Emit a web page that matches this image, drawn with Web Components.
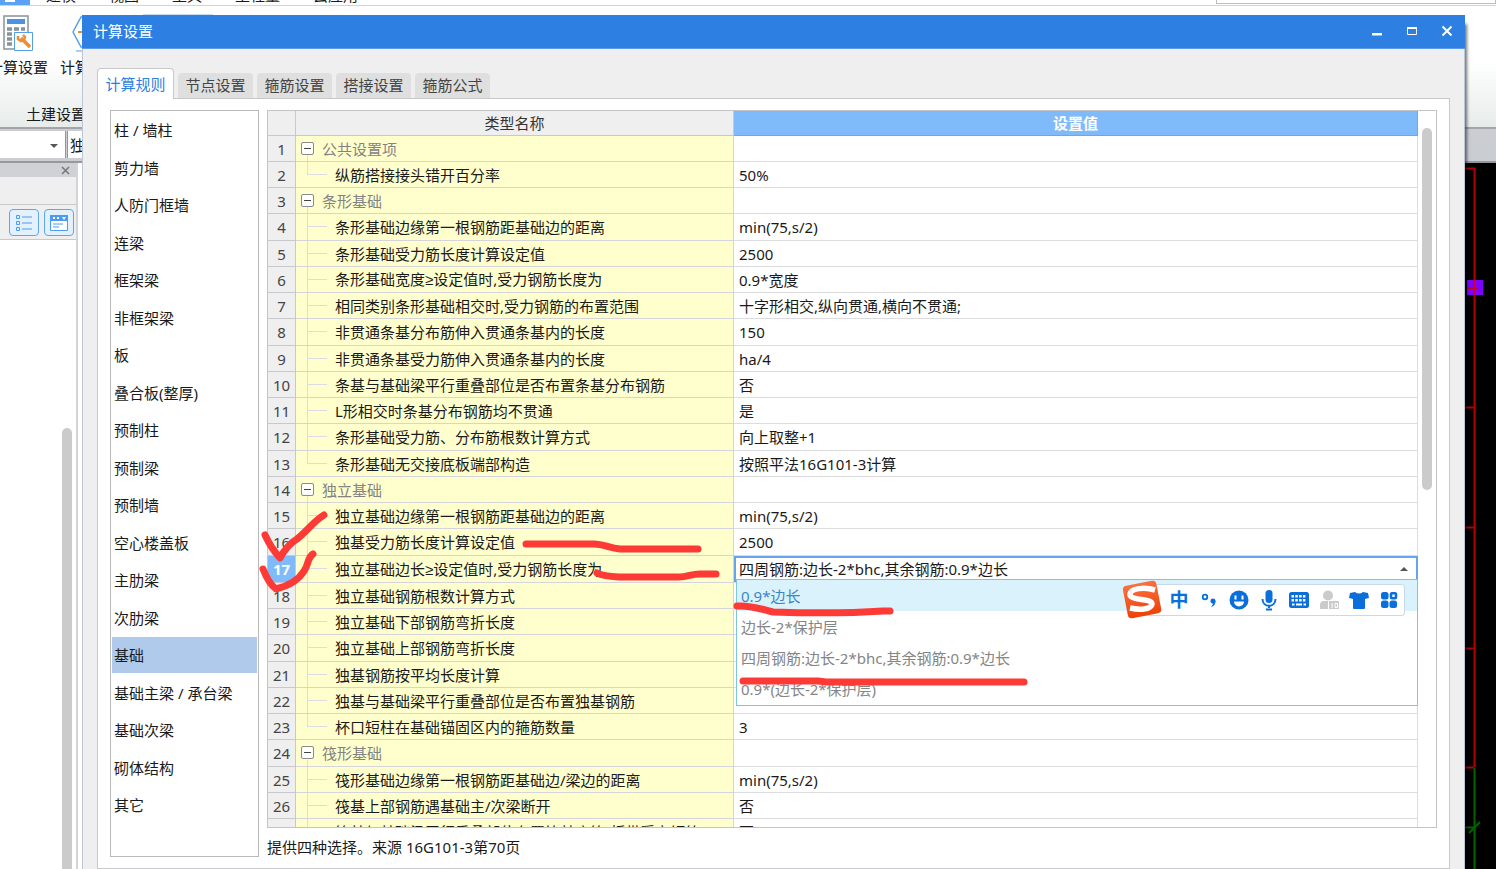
<!DOCTYPE html>
<html lang="zh-CN">
<head>
<meta charset="utf-8">
<title>计算设置</title>
<style>
html,body{margin:0;height:100%;overflow:hidden}
body{position:relative;display:flex;flex-direction:column;background:#fff;color:#1a1a1a;font:15px/20px "Noto Sans","Open Sans","Noto Sans CJK SC",sans-serif}
app-workspace{flex:1}
settings-dialog{position:absolute;left:82px;right:31px;top:15px;bottom:0;z-index:1}
ime-bar{position:absolute;right:91px;top:584px;z-index:2}
ink-marks{position:absolute;left:0;top:0;z-index:3}
</style>
</head>
<body>
<app-ribbon></app-ribbon>
<filter-bar></filter-bar>
<app-workspace><side-dock></side-dock><cad-canvas></cad-canvas></app-workspace>
<settings-dialog heading="计算设置">
  <tab-strip slot="tabs"></tab-strip>
  <category-list slot="nav"></category-list>
  <rule-grid></rule-grid>
  <span slot="hint">提供四种选择。来源 16G101-3第70页</span>
</settings-dialog>
<ime-bar></ime-bar>
<ink-marks></ink-marks>

<script>
const BASE = `:host,*{box-sizing:border-box}button,select,input{font:inherit;color:inherit;margin:0;padding:0;border:0;background:none;border-radius:0;outline:0}button{cursor:default}`;
function define(name, css, html) {
  customElements.define(name, class extends HTMLElement {
    constructor() {
      super();
      const root = this.attachShadow({mode: 'open'});
      root.innerHTML = `<style>${BASE}${css}</style>${typeof html === 'function' ? html(this) : html}`;
    }
  });
}

define('app-ribbon', `
:host{display:block;flex:none}
.menu{display:flex;height:6px;overflow:hidden;border-bottom:1px solid #d4d4d6;align-items:flex-end}
.menu .file{width:30px;height:5px;background:#5aa2f5;display:flex;justify-content:flex-end;padding-right:15px}
.file i{width:10px;height:2px;background:#fff}
.menu nav{display:flex;gap:33px;margin-left:16px;height:2px;align-items:flex-end}
.menu nav button{line-height:20px;height:20px}
.menu input{margin-left:auto;width:280px;height:20px;border:1px solid #bdbdbd;margin-bottom:1px}
.tools{display:flex;height:123px;padding-top:8px;background:linear-gradient(#fff 45%,#e7eceb);border-bottom:2px solid #a5a5a7;align-items:flex-start}
.tool{width:72px;flex:none;text-align:center;white-space:nowrap}
.tool:first-child{margin-left:-18px}
.tool svg{display:block;margin:0 auto 5px}
.group{display:flex;flex-direction:column;width:135px;height:106px;border-right:1px solid #e4e4e6}
.row{display:flex}
.label{margin:27px 0 0 26px}
.on{width:70px;height:60px;margin-left:8px;background:#c8dcf3}
`, `
<div class="menu"><span class="file"><i></i></span><nav><button>建模</button><button>视图</button><button>工具</button><button>工程量</button><button>云应用</button></nav><input aria-label="搜索"></div>
<div class="tools"><div class="group"><div class="row">
<button class="tool"><svg width="36" height="38" viewBox="0 0 36 38"><g fill="none"><path fill="#fff" stroke="#87939b" stroke-width="1.5" d="M4 2h24v33H4z"/><path fill="#4d93e0" d="M7 5h18v5H7z"/><path stroke="#87939b" stroke-width="3.5" stroke-dasharray="5 2" d="M7 15h18M7 20h12M7 25h7M7 30h7"/><path fill="#fff" stroke="#579fe8" d="M14.500 18.500h18v18h-18z"/><path stroke="#ee8e32" stroke-width="3.500" d="m21 24 9 9"/><path stroke="#ee8e32" stroke-width="2.500" d="M18 22v3l3 2 3-1 1-3-2-2"/></g></svg>计算设置</button>
<button class="tool"><svg width="36" height="38" viewBox="0 0 36 38"><path fill="#fff" stroke="#579fe8" stroke-width="1.500" d="m1 18 8-15h18l8 15-8 15H9z"/><path stroke="#ee8e32" stroke-width="2" d="M6 18h24"/><path stroke="#579fe8" d="M4 37h28"/></svg>计算规则</button>
</div><span class="label">土建设置</span></div><button class="on" aria-label="当前工具"></button></div>`);

define('filter-bar', `
:host{display:flex;flex:none;height:34px;padding:2px 0 3px;background:#cacdd2;border-bottom:2px solid #98989c}
label{display:flex;position:relative;width:66px;border-right:1px solid #96969a;background:#fff}
label+label{width:140px;margin-left:1px;border-left:1px solid #96969a}
select{appearance:none;width:100%;padding-left:2px}
label svg{position:absolute;right:7px;top:13px}
`, `<label><select aria-label="楼层"><option></option></select><svg width="8" height="5"><path d="M0 0h8L4 4z" fill="#555"/></svg></label><label><select aria-label="构件类型"><option>独立基础</option></select></label>`);

customElements.define('app-workspace', class extends HTMLElement {
  constructor() {
    super();
    this.attachShadow({mode: 'open'}).innerHTML = `<style>:host{display:flex;min-height:0;background:#fff}</style><slot></slot>`;
  }
});

define('side-dock', `
:host{display:flex;flex-direction:column;width:78px;flex:none;border-right:2px solid #d2d4d8;background:#fff}
.head{height:14px;background:#d0d1d6;display:flex;justify-content:flex-end;align-items:center;padding-right:6px}
.head button{display:flex}
.blank{height:28px;background:#efefef;border-bottom:1px solid #c9c9cb}
.views{height:35px;background:#efefef;border-bottom:1px solid #c9c9cb;display:flex;gap:5px;padding:4px 0 0 9px}
.views button{width:30px;height:27px;border:1px solid #5aa7f5;border-radius:4px;background:#e3f0fd;display:grid;place-items:center;flex:none}
.list{flex:1;display:flex;justify-content:flex-end;padding:188px 4px 0 0}
.thumb{width:10px;background:#cbcbcb;border-radius:5px 5px 0 0}
`, `<div class="head"><button aria-label="关闭"><svg width="9" height="9"><path d="m1 1 7 7m0-7-7 7" stroke="#77777a" stroke-width="1.500"/></svg></button></div><div class="blank"></div>
<div class="views"><button aria-label="列表"><svg width="18" height="18" fill="none" stroke="#4b9cf1"><path d="M1.500 1.500h3v3h-3zm0 6h3v3h-3zm0 6h3v3h-3zM7 3h10M7 9h10M7 15h10"/></svg></button><button aria-label="详情"><svg width="20" height="18"><path fill="#fff" stroke="#4b9cf1" d="M1.500 1.500h17v15h-17z"/><path fill="#4b9cf1" d="M1 1h18v6H1z"/><path stroke="#fff" stroke-dasharray="2 2" stroke-width="2" d="M4 4h7"/><path fill="#fff" d="M13 3h4l-2 3z"/><path stroke="#4b9cf1" d="M4 10h10M4 13h6"/></svg></button></div>
<div class="list"><div class="thumb"></div></div>`);

define('cad-canvas', `
:host{display:flex;flex:1;justify-content:flex-end;margin-left:6px;background:linear-gradient(90deg,#fff 50%,#000 50%)}
svg{display:block;flex:none}
`, `<svg width="60" height="706" fill="none"><g transform="translate(0 -163)"><path stroke="#b40000" stroke-width="2" d="M0 168.500h38.500V767M0 407.500h38M0 527.500h38M0 648.500h38M0 767.500h38"/><path stroke="#006400" stroke-width="2" d="M38.500 768v101M0 827.500h38"/><path stroke="#006400" stroke-width="2" d="m33 833 11-11"/><path fill="#8000ff" d="M31 280h16v15H31z"/><path stroke="#c00030" stroke-width="2" d="M31 288h10m-3-8v15"/></g></svg>`);

define('settings-dialog', `
:host{display:flex;flex-direction:column;border:1px solid #bcc6da;border-width:0 1px;background:#efefef;box-shadow:4px 7px 3px -2px rgba(0,0,0,.55)}
header{display:flex;align-items:center;height:34px;flex:none;margin:0 -1px;padding:0 12px 2px 11px;background:#2d7fe2;border-bottom:1px solid #5b9aea;color:#fff}
h1{flex:1;font:inherit;margin:0}
.ctl{display:flex;gap:23px}
.ctl button{display:flex;width:12px}
.body{flex:1;min-height:0;display:flex;flex-direction:column;padding:19px 14px 0 14px}
.panel{flex:1;min-height:0;display:flex;gap:8px;padding:11px 12px 11px;border:1px solid #c9c9cc;background:#fff;margin-top:-1px}
.main{flex:1;min-width:0;display:flex;flex-direction:column;gap:9px}
.main slot:not([name])::slotted(*){flex:1;min-height:0}
.hint{flex:none;height:20px}
`, el => `<header><h1>${el.getAttribute('heading')}</h1><div class="ctl">
<button aria-label="最小化"><svg width="12" height="12"><path d="M1 8h10v2.500H1z" fill="#fff"/></svg></button>
<button aria-label="最大化"><svg width="12" height="12"><path d="M1.500 2.500h9v7h-9z" fill="none" stroke="#fff"/><path d="M1 2h10v2H1z" fill="#fff"/></svg></button>
<button aria-label="关闭"><svg width="12" height="12"><path d="m1.500 1.500 9 9m0-9-9 9" stroke="#fff" stroke-width="2"/></svg></button></div></header>
<div class="body"><slot name="tabs"></slot><div class="panel"><slot name="nav"></slot><div class="main"><slot></slot><div class="hint"><slot name="hint"></slot></div></div></div></div>`);

define('tab-strip', `
:host{display:flex;align-items:flex-end;gap:4px;flex:none;height:31px;position:relative}
button{width:75px;height:25px;padding-bottom:2px;margin-bottom:1px;background:#dfdfdf;border-radius:4px 4px 0 0;color:#444;white-space:nowrap}
button[aria-selected=true]{width:77px;height:31px;margin:0;border:1px solid #c9c9cc;border-bottom:0;background:#fff;color:#2d7fe2;padding-bottom:0}
`, ['计算规则','节点设置','箍筋设置','搭接设置','箍筋公式'].map((t,i)=>`<button role="tab" aria-selected="${!i}">${t}</button>`).join(''));

define('category-list', `
:host{display:block;flex:none;width:149px;border:1px solid #b9b9b9;background:#fff}
nav{display:flex;flex-direction:column;padding:0 1px}
button{height:37px;padding:0 2px;text-align:left;background-clip:padding-box;border:solid transparent;border-width:1px 0;white-space:nowrap}
button:nth-child(odd){height:38px}
.on{background-color:#b0caec}
`, '<nav>'+['柱 / 墙柱','剪力墙','人防门框墙','连梁','框架梁','非框架梁','板','叠合板(整厚)','预制柱','预制梁','预制墙','空心楼盖板','主肋梁','次肋梁','基础','基础主梁 / 承台梁','基础次梁','砌体结构','其它'].map(t=>`<button${t==='基础'?' class="on" aria-current="true"':''}>${t}</button>`).join('')+'</nav>');

const ROWS = [
 ['公共设置项'],['纵筋搭接接头错开百分率','50%'],
 ['条形基础'],['条形基础边缘第一根钢筋距基础边的距离','min(75,s/2)'],['条形基础受力筋长度计算设定值','2500'],['条形基础宽度≥设定值时,受力钢筋长度为','0.9*宽度'],['相同类别条形基础相交时,受力钢筋的布置范围','十字形相交,纵向贯通,横向不贯通;'],['非贯通条基分布筋伸入贯通条基内的长度','150'],['非贯通条基受力筋伸入贯通条基内的长度','ha/4'],['条基与基础梁平行重叠部位是否布置条基分布钢筋','否'],['L形相交时条基分布钢筋均不贯通','是'],['条形基础受力筋、分布筋根数计算方式','向上取整+1'],['条形基础无交接底板端部构造','按照平法16G101-3计算'],
 ['独立基础'],['独立基础边缘第一根钢筋距基础边的距离','min(75,s/2)'],['独基受力筋长度计算设定值','2500'],['独立基础边长≥设定值时,受力钢筋长度为',null],['独立基础钢筋根数计算方式',''],['独立基础下部钢筋弯折长度',''],['独立基础上部钢筋弯折长度',''],['独基钢筋按平均长度计算',''],['独基与基础梁平行重叠部位是否布置独基钢筋',''],['杯口短柱在基础锚固区内的箍筋数量','3'],
 ['筏形基础'],['筏形基础边缘第一根钢筋距基础边/梁边的距离','min(75,s/2)'],['筏基上部钢筋遇基础主/次梁断开','否'],['筏基与基础梁平行重叠部位布置筏基底筋/板带受力钢筋','否']];
const CHOICES = ['0.9*边长','边长-2*保护层','四周钢筋:边长-2*bhc,其余钢筋:0.9*边长','0.9*(边长-2*保护层)'];
const picker = `<div class="pick"><select aria-label="设置值">${CHOICES.map((c,i)=>`<option${i===2?' selected':''}>${c}</option>`).join('')}</select><svg width="8" height="5"><path d="M0 4h8L4 0z" fill="#555"/></svg></div><div class="menu" role="listbox">${CHOICES.map((c,i)=>`<button role="option" aria-selected="${!i}">${c}</button>`).join('')}</div>`;
function rowHtml(r, i) {
  const n = i + 1, group = r.length === 1, last = !group && ROWS[i+1] && ROWS[i+1].length === 1;
  const text = r[0].replace('≥', '<span class="ge">≥</span>');
  const name = group ? `<td class="group"><button aria-label="折叠"></button>${text}</td>` : `<td class="leaf${last?' last':''}">${text}</td>`;
  return `<tr><th${n===17?' class="cur"':''}>${n}</th>${name}<td class="val${r[1]===null?' edit':''}">${r[1]===null?picker:(r[1]||'')}</td></tr>`;
}
define('rule-grid', `
:host{display:flex;border:1px solid #c4c4c6;overflow:hidden;background:#fff}
table{flex:1;table-layout:fixed;border-collapse:separate;border-spacing:0;height:0;min-width:0}
.c1{width:28px}.c2{width:438px}
th,td{height:26px;padding:0;border:solid #d4d4da;border-width:0 1px 1px 0;font-weight:400;text-align:left;white-space:nowrap;line-height:20px}
thead th{height:25px;text-align:center;background:#efefef;border-color:#c9c9cd;color:#333}
thead th:last-child{background:#7fbafa;border-color:#68a9ee;color:#fff;font-weight:700}
tbody tr:nth-child(4n)>*{height:27px}
tbody th{text-align:center;background:#efefef;border-color:#c9c9cd;color:#444}
tbody th.cur{background:#7fbafa;color:#fff;font-weight:700}
.ge{font-family:"Liberation Sans",sans-serif}
.group,.leaf{background-color:#ffffcd;background-repeat:no-repeat}
.group{padding-left:5px;color:#838383;background-image:linear-gradient(#dcdce4,#dcdce4);background-size:1px 6px;background-position:11px 100%}
.group button{display:inline-block;vertical-align:top;width:13px;height:13px;margin:3px 8px 0 0;border:1px solid #8a8a8a;border-radius:2px;background:linear-gradient(#444,#444) center/7px 1px no-repeat #fff}
.leaf{padding-left:39px;background-image:linear-gradient(#dcdce4,#dcdce4),linear-gradient(#dcdce4,#dcdce4);background-size:1px 100%,20px 1px;background-position:11px 0,11px 12px}
.last{background-size:1px 12px,20px 1px}
.val{padding-left:5px;border-color:#dcdce0}
.edit{position:relative;padding:0}
.pick{display:flex;align-items:center;height:26px;margin-right:-1px;border:2px solid #68a4ea;padding:0 8px 0 3px;background:#fff}
.pick select{flex:1;appearance:none;height:22px}
.menu{position:absolute;left:2px;right:-1px;top:23px;z-index:2;display:flex;flex-direction:column;border:1px solid #7cc6e4;background:#fff}
.menu button{height:31px;padding-left:4px;text-align:left;color:#858585}
.menu button:last-child{height:32px}
.menu [aria-selected=true]{background:#daf2fb;color:#3d86c4}
.bar{flex:none;width:18px;padding:17px 0 0 4px}
.thumb{width:10px;height:362px;border-radius:5px;background:#cbcbcb}
`, `<table><colgroup><col class="c1"><col class="c2"><col></colgroup><thead><tr><th></th><th>类型名称</th><th>设置值</th></tr></thead><tbody>${ROWS.map(rowHtml).join('')}</tbody></table><div class="bar"><div class="thumb"></div></div>`);

define('ime-bar', `
:host{display:flex;align-items:center;height:32px;border:1px solid #c9d8ec;border-radius:3px;background:#fff;padding:0 0 0 21px;color:#0a6fdb}
.logo{position:absolute;left:-22px;top:-7px}
button{width:30px;height:30px;display:grid;place-items:center}
.zh{font-size:19px;font-weight:700}
svg{display:block}
`, `<svg class="logo" width="44" height="44" viewBox="0 0 44 44"><defs><linearGradient id="g" x2="0" y2="1"><stop stop-color="#fb7040"/><stop offset="1" stop-color="#ee4208"/></linearGradient></defs><rect x="4" y="5" width="34" height="33" rx="4" fill="url(#g)" transform="rotate(-11 21 21)"/><path d="M34 12c-10-3-24-2-25 4-1 7 22 4 22 10-1 6-13 6-22 4" fill="none" stroke="#fff" stroke-width="5.500"/></svg>
<button class="zh">中</button>
<button aria-label="标点"><svg width="18" height="18"><circle cx="5" cy="6" r="2.300" fill="none" stroke="currentColor" stroke-width="1.800"/><circle cx="13" cy="10" r="2.500" fill="currentColor"/><path d="M15.500 10q0 5-4.500 6 2-2 2-4" fill="currentColor"/></svg></button>
<button aria-label="表情"><svg width="20" height="20"><circle cx="10" cy="10" r="9.500" fill="currentColor"/><path fill="#fff" d="M5.500 5.500h2v4h-2zm7 0h2v4h-2zM5 11.500h10a5 5 0 0 1-10 0"/></svg></button>
<button aria-label="语音"><svg width="16" height="21"><rect x="4.500" y="0" width="7" height="13" rx="3.500" fill="currentColor"/><path d="M1.500 9c0 9 13 9 13 0M8 16v2m-3 1.500h6" fill="none" stroke="currentColor" stroke-width="2"/></svg></button>
<button aria-label="键盘"><svg width="20" height="16"><rect width="20" height="16" rx="2.500" fill="currentColor"/><path stroke="#fff" stroke-width="2.500" stroke-dasharray="2.500 1.300" d="M2.500 4.200h15M2.500 8.200h15"/><path stroke="#fff" stroke-width="2" d="M3 12.500h2.500m1.500 0h6m1.500 0H17"/></svg></button>
<button aria-label="账户"><svg width="20" height="20" fill="#cbcbcb"><circle cx="9" cy="5.500" r="5"/><path d="M1 19v-4q0-4 4-4h4v8zM10 11h10v8H10z"/><path d="M13 13v5m3-4.500h2.500v4H16z" stroke="#fff" fill="none"/></svg></button>
<button aria-label="皮肤"><svg width="20" height="18"><path fill="currentColor" d="M6 1q4 3 8 0l5 1 1 5-4 1v9q0 1-1 1H5q-1 0-1-1V8L0 7l1-5z"/></svg></button>
<button aria-label="工具箱"><svg width="18" height="18" fill="currentColor"><rect x="1" y="1" width="7.500" height="7.500" rx="2.500"/><rect x="1" y="9.500" width="7.500" height="7.500" rx="2.500"/><rect x="9.500" y="9.500" width="7.500" height="7.500" rx="2.500"/><rect x="11" y="2.200" width="5" height="5" rx="1" fill="none" stroke="currentColor" stroke-width="2.600"/></svg></button>`);

define('ink-marks', `
:host{display:block;pointer-events:none}
svg{display:block}
`, `<svg width="1100" height="720" fill="none" stroke="#fd3a36" stroke-width="7" stroke-linecap="round" stroke-linejoin="round"><path d="M265 535q6 13 15 23 7-13 17-19c11-9 17-18 27-24"/><path d="M263 569q6 15 13 20c12-3 22-8 28-18 5-7 3-13 9-17"/><path d="M526 544h68c10 0 15 4 26 5l78 0"/><path d="M597 573q5 3 22 4h60c9 0 14-4 23-3h14"/><path d="M737 606c14-1 24 3 36 6 30 1 80 1 110-1l7 0"/><path d="M743 681h75l8 1h198"/></svg>`);
</script>
</body>
</html>
